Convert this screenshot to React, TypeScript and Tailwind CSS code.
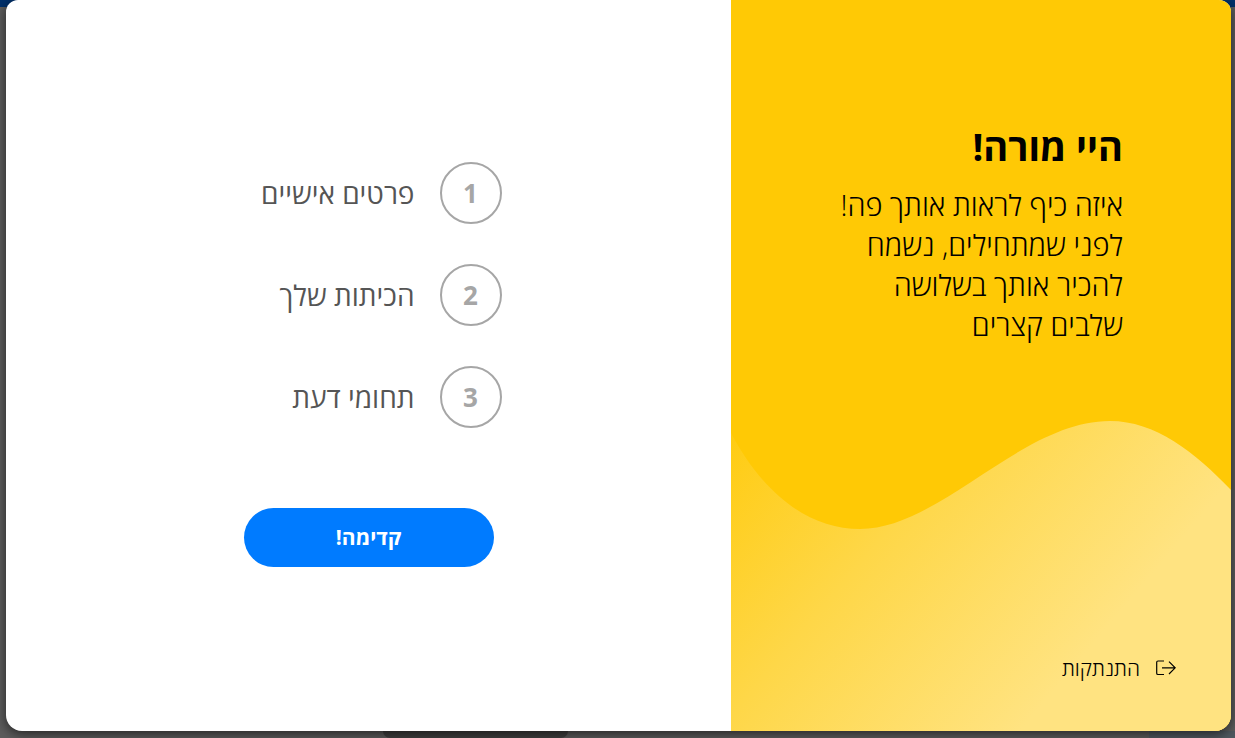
const steps = [
  { id: 1, title: 'פרטים אישיים' },
  { id: 2, title: 'הכיתות שלך' },
  { id: 3, title: 'תחומי דעת' },
];

function Wave() {
  return (
    <svg
      className="absolute inset-x-0 bottom-0 w-full h-[311px]"
      viewBox="0 0 500 311"
      preserveAspectRatio="none"
      aria-hidden="true"
    >
      <defs>
        <linearGradient id="wave" gradientUnits="userSpaceOnUse" x1="-30" y1="-25" x2="322" y2="272">
          <stop offset="0" stopColor="#ffc905" />
          <stop offset="0.5" stopColor="#fed748" />
          <stop offset="1" stopColor="#ffe381" />
        </linearGradient>
      </defs>
      <path
        d="M0 13 C34 77 80 109 129 109 C209 109 290 1 379 1 C424 1 464 32 500 70 V311 H0 Z"
        fill="url(#wave)"
      />
    </svg>
  );
}

function LogoutIcon() {
  return (
    <svg className="w-5 h-4" viewBox="0 0 20 16" fill="none" stroke="currentColor" strokeWidth="1.2" aria-hidden="true">
      <path d="M8 1 H2 Q0.7 1 0.7 2.3 V13.2 Q0.7 14.5 2 14.5 H8" />
      <path d="M6 7.8 H19.2 M13 1.6 L19.2 7.8 L13 14" />
    </svg>
  );
}

// dimmed page that stays visible around the dialog
function Backdrop() {
  return (
    <div dir="ltr" className="absolute inset-0 flex flex-col bg-[#5c5c5c]" aria-hidden="true">
      <div className="h-[7px] bg-[#00306b]" />
      <div className="flex-1" />
      <div className="flex h-[7px]">
        <div className="w-[31%]" />
        <div className="w-[15%] rounded-b-lg bg-[#404040]" />
        <div className="flex-1" />
        <div className="w-[7%] bg-[#50585f]" />
      </div>
    </div>
  );
}

export default function App() {
  return (
    <div
      dir="rtl"
      className="relative flex min-h-screen pl-1.5 pr-1 pb-[7px] overflow-hidden font-['Open_Sans','Noto_Sans',sans-serif]"
    >
      <Backdrop />
      <main className="relative flex flex-1 overflow-hidden rounded-t-xl rounded-b-2xl bg-white shadow-[0_3px_12px_rgba(0,0,0,0.6)]">
        <aside className="relative flex w-[500px] shrink-0 flex-col justify-between bg-[#ffc905] text-black">
          <Wave />
          <div className="relative pt-[121px] pr-[108px] pl-[100px]">
            <h1 className="text-[38px] leading-[50px] font-bold">היי מורה!</h1>
            <p className="mt-3.5 text-[29px] leading-10 font-light">
              איזה כיף לראות אותך פה! לפני שמתחילים, נשמח להכיר אותך בשלושה שלבים קצרים
            </p>
          </div>
          <button type="button" className="relative mr-[55px] mb-[47px] flex items-center gap-4 self-start text-[21px] leading-8 font-light">
            <LogoutIcon />
            התנתקות
          </button>
        </aside>

        <section className="flex flex-1 flex-col items-center pt-[162px]">
          <ol className="flex w-[250px] flex-col gap-10">
            {steps.map((step) => (
              <li key={step.id} className="-mr-2 flex items-center gap-[25px]">
                <span className="flex size-[62px] shrink-0 items-center justify-center rounded-full border-2 border-[#a6a6a6] text-[26px] font-bold text-[#a6a6a6]">
                  {step.id}
                </span>
                <span className="text-[28px] leading-10 whitespace-nowrap text-[#555]">{step.title}</span>
              </li>
            ))}
          </ol>
          <button type="button" className="mt-20 h-[59px] w-[250px] rounded-full bg-[#007bff] text-[21px] font-bold text-white">
            קדימה!
          </button>
        </section>
      </main>
    </div>
  );
}
